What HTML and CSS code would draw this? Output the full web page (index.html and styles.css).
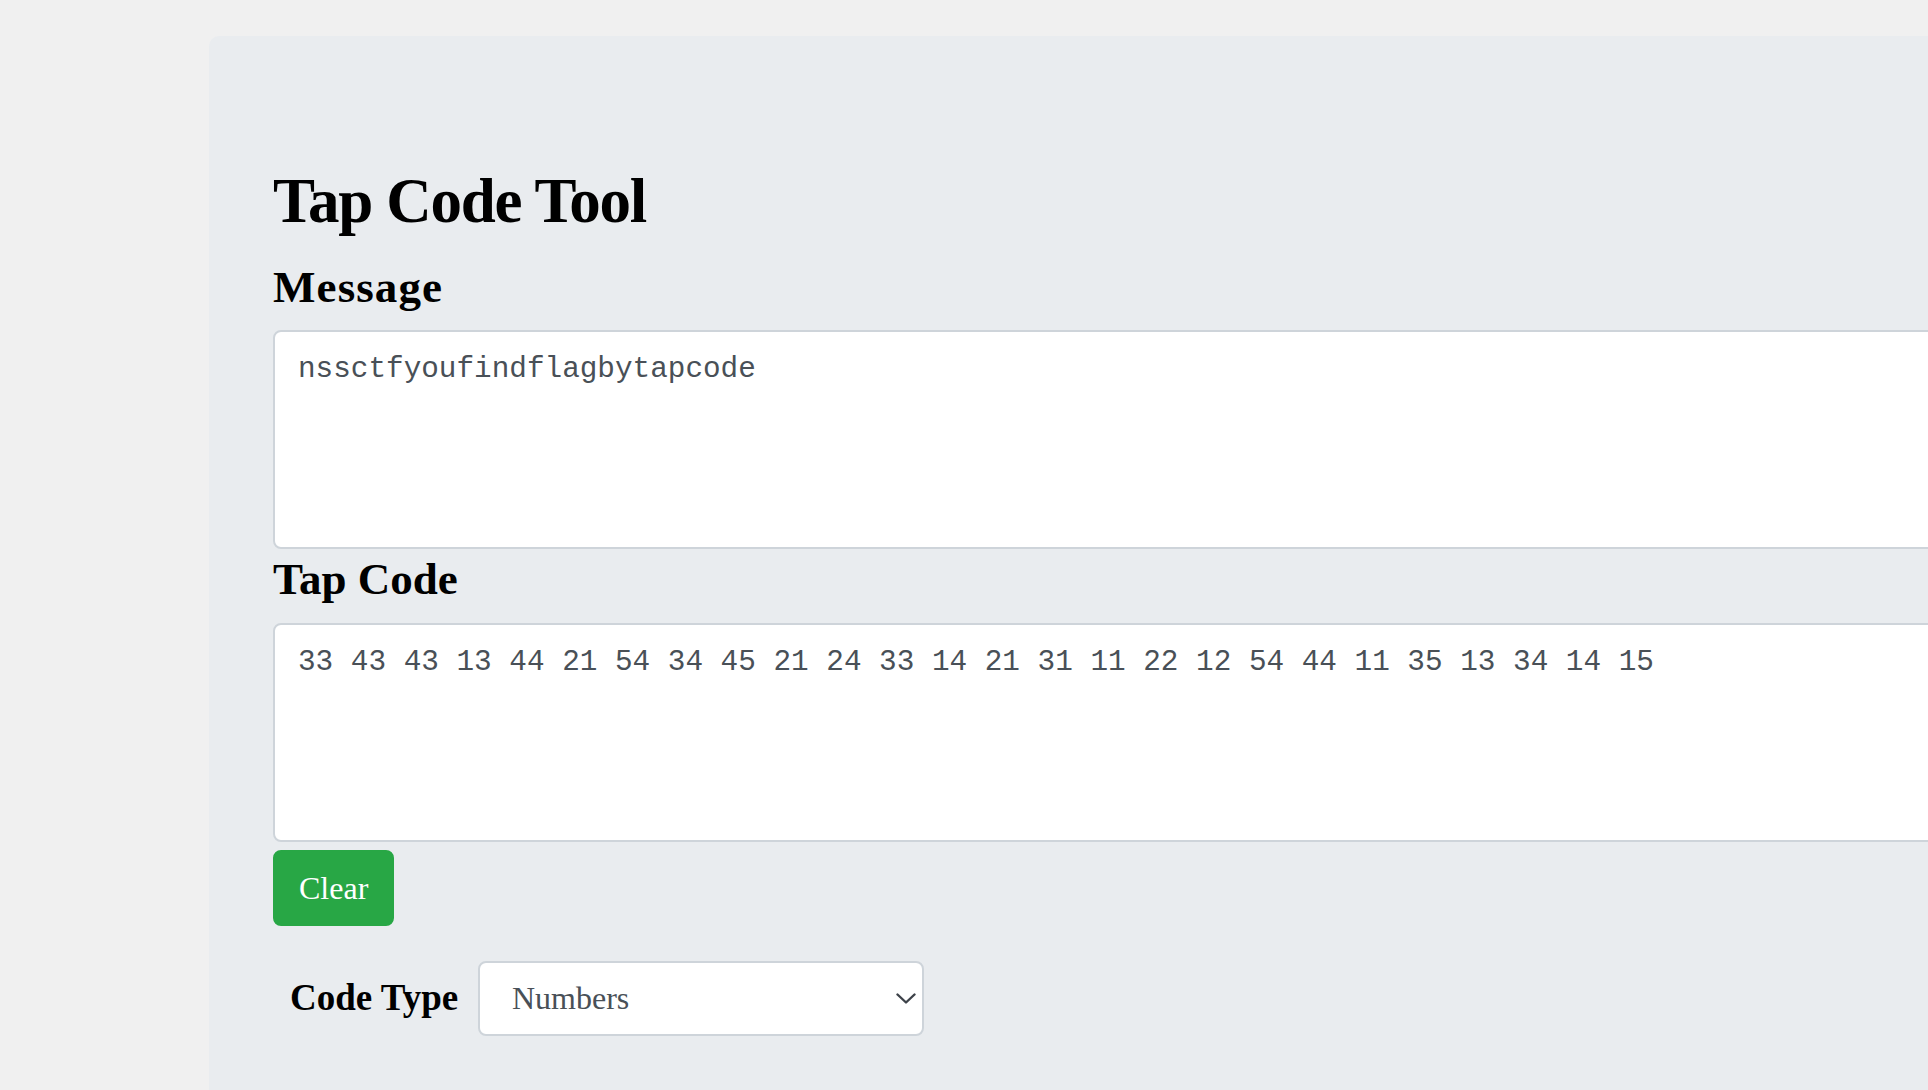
FILE: index.html
```html
<!DOCTYPE html>
<html lang="en">
<head>
<meta charset="utf-8">
<title>Tap Code Tool</title>
<link rel="stylesheet" href="styles.css">
</head>
<body>
<main class="panel">
  <h1 class="title">Tap Code Tool</h1>
  <h3 class="section-title section-title--message">Message</h3>
  <textarea class="field field--message" spellcheck="false">nssctfyoufindflagbytapcode</textarea>
  <h3 class="section-title section-title--code">Tap Code</h3>
  <textarea class="field field--code" spellcheck="false">33 43 43 13 44 21 54 34 45 21 24 33 14 21 31 11 22 12 54 44 11 35 13 34 14 15</textarea>
  <button class="btn-clear" type="button">Clear</button>
  <div class="option-row">
    <label class="option-label" for="codeType">Code Type</label>
    <div class="select-wrap">
      <select class="select" id="codeType">
        <option>Numbers</option>
        <option>Dots</option>
      </select>
      <svg class="chevron" viewBox="0 0 20 11" width="20" height="11" aria-hidden="true">
        <polyline points="1.5,1.5 10,9.5 18.5,1.5" fill="none" stroke="#3d4249" stroke-width="2.4" stroke-linecap="round" stroke-linejoin="round"/>
      </svg>
    </div>
  </div>
</main>
</body>
</html>
```
FILE: styles.css
```css
html, body {
  margin: 0;
  height: 100%;
  overflow: hidden;
}

body {
  background: #f0f0f0;
  padding: 36px 0 0 209px;
  box-sizing: border-box;
  font-family: "Liberation Serif", "Times New Roman", serif;
  color: #000;
}

.panel {
  width: 1900px;
  min-height: 1200px;
  box-sizing: border-box;
  background: #e9ecef;
  border-radius: 10px;
  padding: 128px 64px 128px;
  display: flex;
  flex-direction: column;
  align-items: flex-start;
}

.title {
  margin: 0 0 20px;
  font-size: 63px;
  line-height: 75.6px;
  letter-spacing: -1.3px;
  font-weight: 700;
}

.section-title {
  margin: 0;
  font-size: 45px;
  line-height: 54px;
  font-weight: 700;
}

.section-title--message {
  margin-bottom: 16px;
  letter-spacing: 1.1px;
}

.section-title--code {
  margin-bottom: 17px;
  letter-spacing: 0;
}

.field {
  display: block;
  width: 100%;
  height: 219px;
  box-sizing: border-box;
  margin: 0;
  padding: 14px 23px;
  border: 2px solid #ced4da;
  border-radius: 8px;
  background: #fff;
  color: #495057;
  font-family: "Liberation Mono", "DejaVu Sans Mono", monospace;
  font-size: 29.35px;
  line-height: 48px;
  resize: none;
  outline: none;
}

.field--message {
  margin-bottom: 3px;
}

.btn-clear {
  margin-top: 8px;
  padding: 12px 24px;
  border: 2px solid #28a745;
  border-radius: 8px;
  background: #28a745;
  color: #fff;
  font-family: "Liberation Serif", "Times New Roman", serif;
  font-size: 32px;
  line-height: 48px;
  cursor: pointer;
}

.option-row {
  margin-top: 35px;
  display: grid;
  grid-template-columns: 205px 446px;
  align-items: center;
}

.option-label {
  padding-left: 17px;
  font-size: 37px;
  line-height: 1.2;
  font-weight: 700;
  letter-spacing: 0;
}

.select-wrap {
  position: relative;
  width: 446px;
  height: 75px;
}

.select {
  -webkit-appearance: none;
  appearance: none;
  width: 446px;
  height: 75px;
  box-sizing: border-box;
  margin: 0;
  padding: 0 60px 0 32px;
  border: 2px solid #ced4da;
  border-radius: 8px;
  background: #fff;
  color: #495057;
  font-family: "Liberation Serif", "Times New Roman", serif;
  font-size: 32px;
  outline: none;
}

.chevron {
  position: absolute;
  left: 418px;
  top: 32px;
  pointer-events: none;
}
```
